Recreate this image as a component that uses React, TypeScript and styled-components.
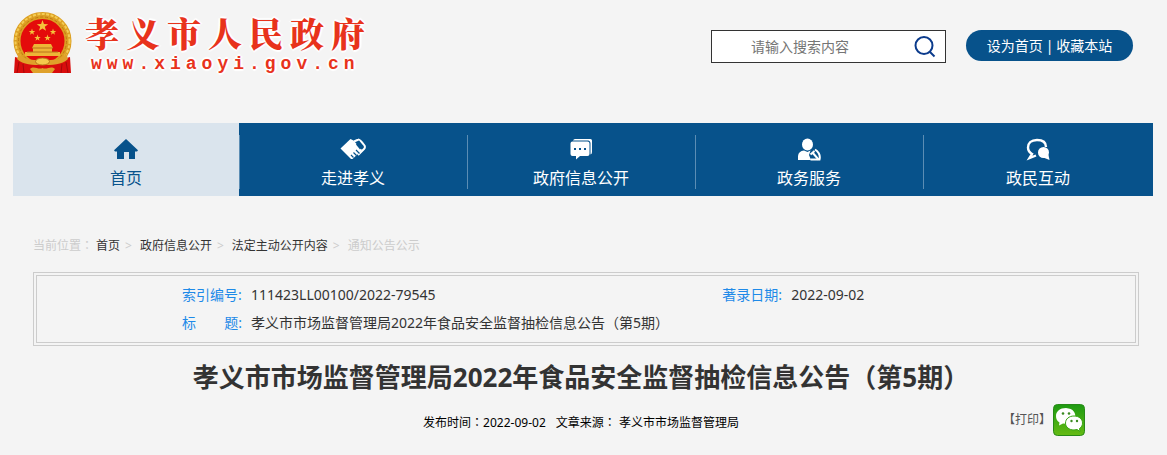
import React from "react";
import styled, { createGlobalStyle } from "styled-components";

const GlobalStyle = createGlobalStyle`
  *, *::before, *::after { box-sizing: border-box; }
  body {
    margin: 0;
    background: #f4f4f4;
    color: #333;
    font-family: "Noto Sans", "Noto Sans CJK SC", sans-serif;
    font-size: 12px;
  }
  a { color: inherit; text-decoration: none; }
`;

const Page = styled.div`
  padding: 0 14px 0 13px;
`;

const Header = styled.header`
  display: flex;
  align-items: flex-start;
  height: 123px;
`;

const Brand = styled.a`
  display: flex;
  align-items: flex-start;
  gap: 13px;
  padding-top: 12px;
  margin-right: auto;
  color: #e8331c;
`;

const BrandText = styled.div`
  display: flex;
  flex-direction: column;
  text-shadow: 2px 0 1px #fff, -2px 0 1px #fff, 0 2px 1px #fff, 0 -2px 1px #fff;
`;

const BrandName = styled.span`
  font: 900 34px/42px "Noto Serif CJK SC", "Noto Sans CJK SC", serif;
  letter-spacing: 7px;
`;

const BrandUrl = styled.span`
  padding-left: 6px;
  font: 700 18px/20px "Liberation Mono", monospace;
  letter-spacing: 5px;
`;

const Search = styled.form`
  display: flex;
  align-items: center;
  width: 235px;
  height: 33px;
  margin: 30px 20px 0 0;
  padding-right: 9px;
  background: #fff;
  border: 1px solid #333;
`;

const SearchInput = styled.input`
  flex: 1;
  min-width: 0;
  padding: 0 0 0 39px;
  border: 0;
  outline: 0;
  background: transparent;
  font: 14px/20px "Noto Sans", "Noto Sans CJK SC", sans-serif;
  &::placeholder { color: #757575; opacity: 1; }
`;

const SearchButton = styled.button`
  display: flex;
  padding: 0;
  border: 0;
  background: none;
`;

const QuickLinks = styled.div`
  display: flex;
  align-items: center;
  justify-content: center;
  gap: 3px;
  width: 167px;
  height: 31px;
  margin: 30px 20px 0 0;
  border-radius: 16px;
  background: #07528b;
  color: #fff;
  font-size: 14px;
  line-height: 20px;
`;

const Nav = styled.nav`
  display: grid;
  grid-template-columns: 226fr 228fr 228fr 228fr 230fr;
  height: 73px;
  background: #07528b;
`;

const NavItem = styled.a<{ $active?: boolean }>`
  position: relative;
  display: flex;
  flex-direction: column;
  align-items: center;
  padding-top: 14px;
  background: ${(p) => (p.$active ? "#dae4ed" : "transparent")};
  color: ${(p) => (p.$active ? "#07528b" : "#fff")};
  font-size: 16px;
  line-height: 24px;
  &:not(:first-child)::before {
    content: "";
    position: absolute;
    top: 12px;
    left: 0;
    width: 1px;
    height: 54px;
    background: #5b8db4;
  }
  svg { margin-bottom: 5px; }
`;

const Main = styled.main`
  padding: 0 14px 16px 20px;
`;

const Crumbs = styled.nav`
  display: flex;
  padding-top: 40px;
  color: #ccc;
  line-height: 20px;
  a { color: #333; }
`;

const CrumbLabel = styled.span`
  margin-right: 3px;
`;

const CrumbArrow = styled.span`
  margin: 0 8px 0 5px;
`;

const Colon = styled.span`
  font-family: "Noto Sans CJK TC", sans-serif;
  line-height: 1;
`;

const Info = styled.dl`
  display: grid;
  grid-template-columns: 542fr 414fr;
  margin: 16px 0 0;
  padding: 5px 0 5px 145px;
  border: 4px double #ccc;
  font-size: 14px;
  line-height: 28px;
`;

const InfoField = styled.div<{ $wide?: boolean }>`
  display: flex;
  gap: 9px;
  grid-column: ${(p) => (p.$wide ? "1 / -1" : "auto")};
  dt { display: flex; justify-content: space-between; width: 60px; color: #1e8ae8; }
  dd { margin: 0; }
`;

const Article = styled.article`
  padding-right: 10px;
`;

const Title = styled.h1`
  margin: 11px 0 0;
  text-align: center;
  font-size: 26px;
  font-weight: 700;
  line-height: 40px;
`;

const Meta = styled.div`
  display: grid;
  grid-template-columns: 1fr auto 1fr;
  align-items: center;
  padding-top: 7px;
  color: #000;
  line-height: 20px;
`;

const Published = styled.p`
  grid-column: 2;
  display: flex;
  gap: 10px;
  margin: 0;
  padding-top: 6px;
`;

const Tools = styled.div`
  display: flex;
  align-items: center;
  justify-content: flex-end;
  gap: 2px;
  padding-right: 44px;
`;

const TextButton = styled.button`
  padding: 0;
  border: 0;
  background: none;
  color: #555;
  font: inherit;
`;

const IconButton = styled(TextButton)`
  display: flex;
`;

const star = (cx: number, cy: number, r: number) =>
  Array.from({ length: 10 }, (_, i) => {
    const a = (Math.PI / 5) * i - Math.PI / 2;
    const q = i % 2 ? r * 0.4 : r;
    return `${cx + q * Math.cos(a)},${cy + q * Math.sin(a)}`;
  }).join(" ");

const Emblem = () => (
  <svg width="59" height="62" viewBox="0 0 59 62" aria-hidden="true">
    <path d="M2 45l7 2 3 14H1zM57 45l-7 2-3 14h11z" fill="#d80d0d" />
    <circle cx="29.500" cy="29" r="25.500" fill="#e40b0b" stroke="#dc9f22" strokeWidth="7" />
    <circle cx="29.500" cy="29" r="27" fill="none" stroke="#f4cd55" strokeWidth="2" strokeDasharray="3 1.500" />
    <circle cx="29.500" cy="29" r="24" fill="none" stroke="#c07a14" strokeWidth="1" strokeDasharray="3 2" />
    <polygon points={star(29.5, 14, 6)} fill="#f5c33b" />
    {[[19, 20], [40, 20], [24.5, 26], [34.5, 26]].map(([x, y]) => (
      <polygon key={x} points={star(x, y, 3.4)} fill="#f5c33b" />
    ))}
    <path d="M21 32h17l2 4H19zM20 36h19v4H20zM12 40h35v4H12z" fill="#eeb536" />
    <path d="M19 36h21M14 40h31" stroke="#b8741a" />
    <path d="M7 46c4 2 10 4 15 3l7 3 8-3c5 1 11-1 15-3l1 15H6z" fill="#d90d0d" />
    <path d="M6 41c5 8 14 7 23.500 7S48 49 53 41l2 6c-6 6-16 6-25.500 6S10 53 4 47z" fill="#e0a02a" />
    <ellipse cx="29.500" cy="49.500" rx="7" ry="3.500" fill="#f4c94c" stroke="#b8741a" />
    <path d="M17 57c4-4 8 1 12.500-1 4.500 2 8.500-3 12.500 1l-3 4H20z" fill="#dfa12b" />
    <path d="M6 50l-2 11M10 52l1 9M53 50l2 11M49 52l-1 9" stroke="#a50909" />
  </svg>
);

const SearchIcon = () => (
  <svg width="22" height="22" viewBox="0 0 22 22" fill="none" stroke="#0b3b8c" strokeWidth="2" aria-hidden="true">
    <circle cx="10" cy="9.500" r="8.500" />
    <path d="M16 16l4.500 4.500" />
  </svg>
);

const HomeIcon = () => (
  <svg width="26" height="24" viewBox="0 0 26 24" fill="currentColor" aria-hidden="true">
    <path d="M13 2L25 13.300 24 14.500h-2V22h-6v-7h-5v7H4v-7.500H2L1 13.300z" />
  </svg>
);

const HandsIcon = () => (
  <svg width="26" height="24" viewBox="0 0 26 24" aria-hidden="true">
    <path d="M.5 11.500L10.500 2l3 1.500 8.500 9.500-9.500 9h-1.500z" fill="#fff" />
    <path d="M14 4.500L18.500 2.500Q19.500 2 24.500 8.500q1 2-.5 3.500l-6 6" fill="none" stroke="#fff" strokeWidth="2" />
    <path d="M16 7.500l2.500-2.500 4 5-2.500 2.500z" fill="#07528b" />
    <path d="M11 18l2.500 2.500M13.500 15.500l3 3M16 13l3.500 3.500" stroke="#07528b" strokeWidth="1.200" />
  </svg>
);

const MessageIcon = () => (
  <svg width="26" height="24" viewBox="0 0 26 24" aria-hidden="true">
    <path d="M5 3.500Q5.500 2 7 2h15.500Q24 2 24 3.500V15q0 2-1.500 2.500V6q0-2-2-2.500z" fill="#fff" />
    <path d="M4.500 4.500h15Q21.500 4.500 21.500 6.500V17q0 2-2 2H12l-4 3.500V19H4.500q-2 0-2-2V6.500q0-2 2-2z" fill="#fff" />
    <path d="M6 11h2v2H6zm5 0h2v2h-2zm5 0h2v2h-2z" fill="#07528b" />
  </svg>
);

const ServiceIcon = () => (
  <svg width="26" height="24" viewBox="0 0 26 24" aria-hidden="true">
    <ellipse cx="11.500" cy="7.500" rx="5.500" ry="6" fill="#fff" />
    <path d="M2 23v-4q.500-5 6-5.500l3.500 1.500 3-1.500L13 18l2 5z" fill="#fff" />
    <path d="M19 12.500q6 4 4.500 10h-9" fill="none" stroke="#fff" strokeWidth="2" />
    <path d="M14.500 17.500l4-3.500M16 15l6.500 7.500" stroke="#fff" strokeWidth="2" />
  </svg>
);

const ChatIcon = () => (
  <svg width="26" height="24" viewBox="0 0 26 24" aria-hidden="true">
    <path d="M21 10C21 5 17 3 12 3 6 3 3 6.500 3 10.500c0 3 1.500 5 4 6.500l-2.500 4 6.500-2.500" fill="none" stroke="#fff" strokeWidth="2.400" />
    <ellipse cx="18.500" cy="15.500" rx="5.500" ry="5.500" fill="#fff" />
    <path d="M17 20l6.500-2 1 5z" fill="#fff" />
  </svg>
);

const WeChatIcon = () => (
  <svg width="32" height="32" viewBox="0 0 32 32" aria-hidden="true">
    <defs>
      <linearGradient id="wx" x2="0" y2="1">
        <stop stopColor="#1d9a12" />
        <stop offset="1" stopColor="#65bb13" />
      </linearGradient>
    </defs>
    <rect x=".5" y=".5" width="31" height="31" rx="4" fill="url(#wx)" stroke="#278a17" />
    <path d="M13 4C7 4 3 7.500 3 12c0 3 1 5 3.500 6.500L6 21.500l4-2q9 1 12-4Q24 5 13 4z" fill="#fff" />
    <path d="M21 12c-5 0-8.500 3-8.500 7s3.500 7 8.500 7l3-.5 3 2-.5-3c2-1.500 3-3 3-5.500 0-4-3.500-7-8.500-7z" fill="#fff" stroke="#3ba514" />
    <g fill="#3a8a20">
      <circle cx="10" cy="9.500" r="1.300" /><circle cx="16" cy="9.500" r="1.300" />
      <circle cx="18.500" cy="17" r="1.200" /><circle cx="24" cy="17" r="1.200" />
    </g>
  </svg>
);

const navItems = [
  { label: "首页", Icon: HomeIcon },
  { label: "走进孝义", Icon: HandsIcon },
  { label: "政府信息公开", Icon: MessageIcon },
  { label: "政务服务", Icon: ServiceIcon },
  { label: "政民互动", Icon: ChatIcon },
];

const crumbs = ["首页", "政府信息公开", "法定主动公开内容"];

export default function App() {
  return (
    <>
      <GlobalStyle />
      <Page>
        <Header>
          <Brand href="#">
            <Emblem />
            <BrandText>
              <BrandName>孝义市人民政府</BrandName>
              <BrandUrl>www.xiaoyi.gov.cn</BrandUrl>
            </BrandText>
          </Brand>
          <Search onSubmit={(e) => e.preventDefault()}>
            <SearchInput aria-label="搜索" placeholder="请输入搜索内容" />
            <SearchButton aria-label="搜索"><SearchIcon /></SearchButton>
          </Search>
          <QuickLinks>
            <a href="#">设为首页</a>
            <span>|</span>
            <a href="#">收藏本站</a>
          </QuickLinks>
        </Header>
        <Nav>
          {navItems.map(({ label, Icon }, i) => (
            <NavItem key={label} href="#" $active={i === 0}>
              <Icon />
              {label}
            </NavItem>
          ))}
        </Nav>
        <Main>
          <Crumbs aria-label="当前位置">
            <CrumbLabel>当前位置<Colon>：</Colon></CrumbLabel>
            {crumbs.map((c) => (
              <React.Fragment key={c}>
                <a href="#">{c}</a>
                <CrumbArrow>&gt;</CrumbArrow>
              </React.Fragment>
            ))}
            <span>通知公告公示</span>
          </Crumbs>
          <Info>
            <InfoField><dt>索引编号:</dt><dd>111423LL00100/2022-79545</dd></InfoField>
            <InfoField><dt>著录日期:</dt><dd>2022-09-02</dd></InfoField>
            <InfoField $wide><dt><span>标</span><span>题:</span></dt><dd>孝义市市场监督管理局2022年食品安全监督抽检信息公告（第5期）</dd></InfoField>
          </Info>
          <Article>
            <Title>孝义市市场监督管理局2022年食品安全监督抽检信息公告（第5期）</Title>
            <Meta>
              <Published>
                <span>发布时间<Colon>：</Colon>2022-09-02</span>
                <span>文章来源<Colon>：</Colon> 孝义市市场监督管理局</span>
              </Published>
              <Tools>
                <TextButton>【打印】</TextButton>
                <IconButton aria-label="微信"><WeChatIcon /></IconButton>
              </Tools>
            </Meta>
          </Article>
        </Main>
      </Page>
    </>
  );
}
